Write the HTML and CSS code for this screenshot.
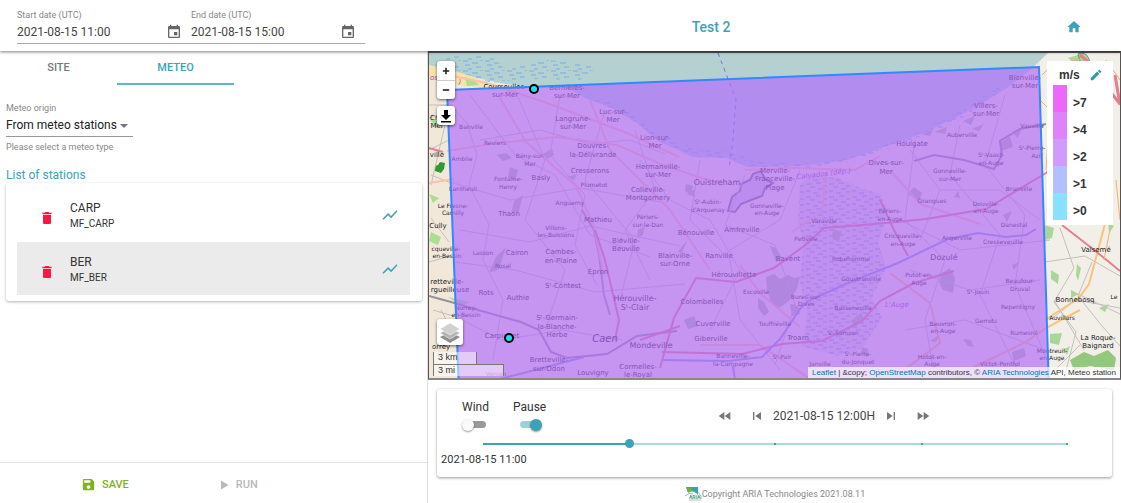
FILE: index.html
```html
<!DOCTYPE html>
<html lang="en">
<head>
    <meta charset="UTF-8">
    <meta name="viewport" content="width=device-width, initial-scale=1.0">
    <title>Test 2</title>
    <link rel="stylesheet" href="styles.css">
</head>
<body>

    <header class="header">
        <div class="dates">
            <div class="date-field">
                <label for="start">Start date (UTC)</label>
                <div class="date-row">
                    <input id="start" type="text" value="2021-08-15 11:00">
                    <button class="icon-button" aria-label="Pick start date">
                        <svg viewBox="0 0 24 24"><path d="M17 12h-5v5h5v-5zM16 1v2H8V1H6v2H5c-1.100 0-2 .9-2 2v14c0 1.100.900 2 2 2h14c1.100 0 2-.9 2-2V5c0-1.100-.9-2-2-2h-1V1h-2zm3 18H5V8h14v11z"/></svg>
                    </button>
                </div>
            </div>
            <div class="date-field">
                <label for="end">End date (UTC)</label>
                <div class="date-row">
                    <input id="end" type="text" value="2021-08-15 15:00">
                    <button class="icon-button" aria-label="Pick end date">
                        <svg viewBox="0 0 24 24"><path d="M17 12h-5v5h5v-5zM16 1v2H8V1H6v2H5c-1.100 0-2 .9-2 2v14c0 1.100.900 2 2 2h14c1.100 0 2-.9 2-2V5c0-1.100-.9-2-2-2h-1V1h-2zm3 18H5V8h14v11z"/></svg>
                    </button>
                </div>
            </div>
        </div>
        <h1>Test 2</h1>
        <a class="home" href="#" aria-label="Home">
            <svg viewBox="0 0 24 24"><path d="M10 20v-6h4v6h5v-8h3L12 3 2 12h3v8z"/></svg>
        </a>
    </header>

    <main class="content">
        <section class="sidebar">
            <nav class="tabs">
                <button class="tab">SITE</button>
                <button class="tab active">METEO</button>
            </nav>

            <div class="panel">
                <div class="origin">
                    <label for="origin">Meteo origin</label>
                    <div class="select-box">
                        <select id="origin">
                            <option>From meteo stations</option>
                        </select>
                    </div>
                    <p class="hint">Please select a meteo type</p>
                </div>

                <h2>List of stations</h2>
                <ul class="stations">
                    <li class="station">
                        <button class="icon-button delete" aria-label="Delete CARP">
                            <svg viewBox="0 0 24 24"><path d="M6 19c0 1.100.9 2 2 2h8c1.100 0 2-.9 2-2V7H6v12zM19 4h-3.500l-1-1h-5l-1 1H5v2h14V4z"/></svg>
                        </button>
                        <div class="station-name">
                            <span>CARP</span>
                            <small>MF_CARP</small>
                        </div>
                        <button class="icon-button chart" aria-label="Show chart of CARP">
                            <svg viewBox="0 0 24 24"><path d="M3.500 18.490l6-6.010 4 4L22 6.920l-1.410-1.410-7.090 7.970-4-4L2 16.990z"/></svg>
                        </button>
                    </li>
                    <li class="station selected">
                        <button class="icon-button delete" aria-label="Delete BER">
                            <svg viewBox="0 0 24 24"><path d="M6 19c0 1.100.9 2 2 2h8c1.100 0 2-.9 2-2V7H6v12zM19 4h-3.500l-1-1h-5l-1 1H5v2h14V4z"/></svg>
                        </button>
                        <div class="station-name">
                            <span>BER</span>
                            <small>MF_BER</small>
                        </div>
                        <button class="icon-button chart" aria-label="Show chart of BER">
                            <svg viewBox="0 0 24 24"><path d="M3.500 18.490l6-6.010 4 4L22 6.920l-1.410-1.410-7.090 7.970-4-4L2 16.990z"/></svg>
                        </button>
                    </li>
                </ul>
            </div>

            <div class="actions">
                <button class="action save">
                    <svg viewBox="0 0 24 24"><path d="M17 3H5c-1.110 0-2 .9-2 2v14c0 1.100.890 2 2 2h14c1.100 0 2-.9 2-2V7l-4-4zm-5 16c-1.660 0-3-1.340-3-3s1.340-3 3-3 3 1.340 3 3-1.340 3-3 3zm3-10H5V5h10v4z"/></svg>
                    SAVE
                </button>
                <button class="action run" disabled>
                    <svg viewBox="0 0 24 24"><path d="M6 3v18l15-9z"/></svg>
                    RUN
                </button>
            </div>
        </section>

        <section class="viewer">
            <div class="map">
                <svg class="map-canvas" viewBox="429 53 691 326" preserveAspectRatio="xMinYMin slice">
                    <defs>
                        <pattern id="waves" width="22" height="10" patternUnits="userSpaceOnUse">
                            <path d="M1 1h5M10 3h6M18 0h3M3 5h5M14 7h5M6 9h4" stroke="#6fb0e4" fill="none"/>
                        </pattern>
                        <pattern id="marsh" width="23" height="13" patternUnits="userSpaceOnUse">
                            <path d="M1 2h5M11 1h5M18 4h4M5 5h5M13 7h5M1 9h4M8 11h5M18 10h4" stroke="#7f9fe0" stroke-width="1" fill="none"/>
                        </pattern>
                    </defs>

                    <rect x="429" y="53" width="691" height="326" fill="#f2e8da"/>
                    <path d="M1040 53h80v326h-75z" fill="#f2efe9"/>

                    <!-- sea -->
                    <path d="M429 53H1048L1030 70 1007 88 987 100 957 117 923 133 890 145 847 160 803 166 747 167 727 158 693 157 658 141 638 124 612 108 585 98 568 88 538 87 505 84 482 79 455 73 429 67z" fill="#b4d0d1"/>
                    <path d="M446 56h46l14 14 38-11 56 8-20 13-60-1-28 4-24-7-20-2zM585 96l30 6 45 35 40 12 28 2 25 10 50 3 47-7 40-14 34-13 45-24 30-20 5 3-48 33-50 20-60 21-40 5-56-1-20-9-32-1-38-16-25-20-25-13z" fill="url(#waves)"/>
                    <path d="M429 65q30 6 52 15t36 6l-4 4-20-2-30-2q-20-6-34-8z" fill="#f6e3ab"/>
                    <path d="M465 77q10 3 14 8l-12 1zM429 118l12 4-4 6zM429 194l10 4-6 5zM431 232l10 5-3 8-9-4zM448 297l22 5-8 4z" fill="#abdd92"/>

                    <!-- marshes -->
                    <path d="M800 184l12-8 26 2 22 10 20 6 8 18-10 30 8 26-14 30 10 20-20 30-24 8-36-10 6-34-8-30 4-40-6-20z" fill="#e0dcd4"/>
                    <path d="M800 184l12-8 26 2 22 10 20 6 8 18-10 30 8 26-14 30 10 20-20 30-24 8-36-10 6-34-8-30 4-40-6-20z" fill="url(#marsh)"/>
                    <path d="M728 211l4-14 8-6 1-7 9-4 3-6 8-3 4 8 8 4-8 5-3 8-11 4-10 4-6 8z" fill="#d3cfd6" stroke="#747a7c" stroke-width="2"/>

                    <!-- woods -->
                    <g fill="#b0be9e">
                        <path d="M766 277l8-3 6 5 8-4 6 3 6-1-3 12-8 12-10 7-8-6-4-12z"/>
                        <path d="M790 304l8 2 2 8-8 2zM833 229l8 3-2 10-7-4zM686 184l7 2-2 8-6-3zM687 194l8-5v8zM942 273l8-5 5 10-2 15-10-3-4-8zM1000 143l10-6 3 10-12 4zM1012 132l10-4-4 10zM908 194l6-7 8 6-3 8zM921 134l12-4-3 6zM934 132l13-5-2 7zM963 121l12-5-4 9zM972 129l12-5-5 7zM497 155l9-2 6 5-9 3zM510 167l8 3-3 11-7-4zM543 154l9-5 2 6-7 4zM567 177l10-3-3 6zM514 201l9-6-4 16-8 3zM496 257l10-10-7 22-10 4zM638 230l6-3-1 8-6 3zM678 252l9-12-5 13zM684 320l10-4 4 10-10 3zM851 321l10-8 3 6-9 8zM862 347l6 2-1 8-6-4zM1003 215l9-4-5 11zM1012 265l7-3-5 8zM930 341l9-6-3 7zM963 339l8 1 3 7-6-1zM1012 352l12-4 2 8-12 5zM954 197l4-6 2 7zM758 298l6 4 5 10-5 4-6-8zM770 246l6 2 6 10-6 4z"/>
                    </g>
                    <g fill="#abd69a">
                        <path d="M1045 225l9 3-2 10-7 2zM1051 270l8 5-1 9-7-5zM1077 264l4 4-3 13-2-6zM1099 308l10-4-4 8zM1071 290l8 4-8 4zM1050 334l12-1-3 12-9-2zM1108 222l6 4-5 7zM1063 350l7-4-3 9zM1068 58l10-3 6 6-8 4z"/>
                        <path d="M1070 360l14-8 10 4 14-6 8 8-2 12-24-4-16 4z" fill="#93c97c"/>
                        <path d="M1078 54q8-3 11 5t-9 2z" stroke="#5c9b68"/>
                    </g>
                    <path d="M435 166l3-1 2-3 5 1-1 6-3 4-6-2z" fill="#2f9b2f"/>

                    <!-- minor roads -->
                    <g fill="none" stroke="#c6bebc" stroke-width="1">
                        <path d="M447 101l20 22 10 32-8 30 20 40-6 35 20 40-10 60M470 95l45 60 40 20 35 60 60 22M515 90l30 70-20 60 40 50-20 60M560 95l-10 60 35 40-10 50 22 40M605 110l-20 70 50 60-15 60M635 130l20 60-30 40 25 50M480 140l60-10 50 14 40-4 35 14M450 182l60 18 70-12 80 14M460 230l70 12 60-16 90 20M455 262l60 8 80 22 90-8M462 320l40 20 60-10 60 10M640 160l30 40 40 20 30 50-30 60M700 160l-10 60 40 40 10 60 40 50M745 175l-20 50 50 20 20 60-20 60M800 170l-20 50-50 30M910 150l30 40 60 0 40 30M915 140l-10 80 40 40-20 60 10 60M960 125l-10 50 50 60-20 60 40 80M1005 95l-20 70 40 50-10 70 30 70M900 220l60 30 90-10M910 270l60 20 70-10M905 330l60-10 80 30M940 190l-20 50"/>
                        <path d="M429 105l18 0M429 118l20-6M429 150l20-10M431 175l20 8M445 125l-14 60M431 218l18 24M429 262l22-6M433 310l20 6M441 310l16 30M1060 228l14 40-20 34 22 30-12 46M1045 262l40-6 35 20M1078 294l42 20M1050 320l26-20 44 8M1080 345l-30 30M1092 262l-14 34 24 30 18 20M1054 300l30 50"/>
                    </g>
                    <path d="M429 296l22 6 20 6 50 14 18 8 12 22 16 6 40-4 30-18 40-5M914 161l20-6 30 5 30 9 8-14-2-14 20-12 26-5" fill="none" stroke="#999097" stroke-width="2"/>
                    <path d="M582 210l12 20 5 25 5 40 6 20" fill="none" stroke="#a0a4a8" stroke-width="2"/>

                    <!-- main roads -->
                    <g fill="none" stroke="#f9c2a8" stroke-width="2">
                        <path d="M447 151l50-8 60-6 60 8 46 20 60 20M500 98l26 44 50 44 18 40 10 50M590 100l20 50 60 60 40 60M429 183l25-4M447 75l40 8 60 20 80 30 52 24M745 170l50-2 60 2 25-14M826 172l-4 40-30 20M700 345l60 0 50 34M740 265l20 28 40 34M890 170l30 34 60 20"/>
                        <path d="M1080 310l-34 18-20 14-50 24-20 13M900 373l40-30-10-40-40-30M1105 224l-16 60-10 14-34 22" stroke="#fbc27c"/>
                    </g>
                    <g fill="none" stroke="#e28090" stroke-width="2">
                        <path d="M660 368l14-50 22-40 40 4 38-14 30-22 20-18 62-5 40-4 60-10 60-36 13-12M662 352l80 2 40-10 40-3 40-20 18-20 34-18 40-12M595 230l10 30 14 60-4 20M640 340l40-14M880 200l14 30 14 26M1062 225l36 28 22 18M429 148l14 4"/>
                        <path d="M1115 75l5 30M1080 55l12 10M1098 76l22 28" stroke-width="3"/>
                    </g>
                    <g fill="none" stroke="#8e9ad4" stroke-width="2">
                        <path d="M500 379l50-13 34-9M662 360l66 1 34-4 18-18 20-30 8-8 40-18 50-20 50-24 30-6 28 4 20-2 10-6"/>
                        <path d="M733 366l2 14"/>
                    </g>
                    <path d="M718 53l10 26 8 20-3 40-4 30" fill="none" stroke="#6a78e8" stroke-dasharray="4 4"/>
                    <path d="M1040 100l10 10-4 60M1110 230l-6 30M1116 180l4 40M1106 60l14 20M1042 75l10-10 30-6" fill="none" stroke="#f0b070"/>

                    <!-- place names -->
                    <g class="place small">
                        <text x="471" y="129">Banville</text><text x="495" y="145">Reviers</text><text x="530" y="158">Bény-sur-</text><text x="530" y="166">Mer</text>
                        <text x="462" y="161">Amblie</text><text x="594" y="187">Plumetot</text><text x="508" y="181">Fontaine-</text><text x="508" y="189">Henry</text>
                        <text x="463" y="191">Lantheuil</text><text x="570" y="205">Anguerny</text><text x="453" y="208">Le Fresne-</text><text x="453" y="215">Camilly</text>
                        <text x="648" y="219">Périers-</text><text x="648" y="227">sur-le-Dan</text><text x="556" y="230">Villons-</text><text x="556" y="237">les-Buissons</text>
                        <text x="446" y="251">cqueville-</text><text x="447" y="258">en-Bessin</text><text x="483" y="255">Lasson</text><text x="503" y="268">Rosel</text>
                        <text x="466" y="310">Norrey-</text><text x="466" y="317">en-Bessin</text><text x="708" y="204">Sᵗ-Aubin-</text><text x="708" y="212">d'Arquenay</text>
                        <text x="767" y="208">Gonneville-</text><text x="767" y="215">en-Auge</text><text x="824" y="223">Varaville</text><text x="890" y="213">Périers-</text><text x="890" y="221">en-Auge</text>
                        <text x="806" y="241">Petiville</text><text x="903" y="238">Cricqueville-</text><text x="903" y="246">en-Auge</text><text x="851" y="261">Robehomme</text>
                        <text x="861" y="281">Goustranville</text><text x="756" y="294">Escoville</text><text x="806" y="299">Bures-sur-</text><text x="806" y="306">Dives</text>
                        <text x="853" y="310">Basseneville</text><text x="775" y="326">Touffréville</text><text x="843" y="335">Sᵗ-Samson</text><text x="733" y="358">Banneville-</text><text x="733" y="366">la-Campagne</text>
                        <text x="782" y="359">Sᵗ-Pair</text><text x="858" y="356">Sᵗ-Pierre-</text><text x="858" y="364">du-Jonquet</text><text x="820" y="366">Janville</text>
                        <text x="962" y="137">Auberville</text><text x="991" y="157">Sᵗ-Vaast-</text><text x="991" y="165">en-Auge</text><text x="1032" y="150">Sᵗ-Pierre-</text><text x="1037" y="158">Azif</text>
                        <text x="1032" y="128">Vauville</text><text x="950" y="173">Gonneville-</text><text x="950" y="181">sur-Mer</text><text x="1019" y="191">Branville</text><text x="932" y="203">Grangues</text>
                        <text x="986" y="206">Douville-</text><text x="986" y="213">en-Auge</text><text x="1014" y="227">Danestal</text><text x="957" y="240">Angerville</text><text x="1003" y="244">Cresseveuille</text>
                        <text x="919" y="277">Putot-en-</text><text x="919" y="285">Auge</text><text x="1020" y="283">Beaufour-</text><text x="1020" y="291">Druval</text><text x="978" y="294">Sᵗ-Jouin</text>
                        <text x="1018" y="309">Repentigny</text><text x="986" y="323">Gerrots</text><text x="943" y="326">Beuvron-</text><text x="943" y="333">en-Auge</text><text x="1024" y="335">Rumesnil</text>
                        <text x="1052" y="353">Montreuil-</text><text x="1052" y="360">en-Auge</text><text x="932" y="359">Hotot-en-</text><text x="932" y="366">Auge</text><text x="1000" y="366">Victot-Pontfol</text>
                        <text x="1062" y="320">Auvillars</text><text x="1114" y="299">Le</text><text x="496" y="376">Verson</text>
                    </g>
                    <g class="place">
                        <text x="505" y="89">Courseulles-</text><text x="505" y="97">sur-Mer</text><text x="567" y="90">Bernières-</text><text x="567" y="98">sur-Mer</text>
                        <text x="573" y="121">Langrune-</text><text x="573" y="129">sur-Mer</text><text x="613" y="114">Luc-sur-</text><text x="613" y="122">Mer</text>
                        <text x="593" y="148">Douvres-</text><text x="593" y="157">la-Délivrande</text><text x="590" y="173">Cresserons</text><text x="541" y="180">Basly</text><text x="509" y="216">Thaon</text>
                        <text x="655" y="140">Lion-sur-</text><text x="655" y="148">Mer</text><text x="658" y="169">Hermanville-</text><text x="658" y="177">sur-Mer</text>
                        <text x="648" y="192">Colleville-</text><text x="648" y="200">Montgomery</text><text x="437" y="157">ville</text><text x="437" y="128">Mer</text><text x="436" y="120">Cro</text>
                        <text x="438" y="228">Cully</text><text x="598" y="222">Mathieu</text><text x="626" y="243">Biéville-</text><text x="626" y="251">Beuville</text><text x="517" y="255">Cairon</text>
                        <text x="561" y="254">Cambes-</text><text x="561" y="263">en-Plaine</text><text x="598" y="274">Épron</text><text x="675" y="258">Blainville-</text><text x="675" y="266">sur-Orne</text>
                        <text x="563" y="288">Sᵗ-Contest</text><text x="447" y="284">retteville-</text><text x="450" y="292">rgueilleuse</text><text x="486" y="295">Rots</text><text x="518" y="300">Authie</text>
                        <text x="557" y="320">Sᵗ-Germain-</text><text x="557" y="329">la-Blanche-</text><text x="557" y="337">Herbe</text><text x="502" y="338">Carpiquet</text>
                        <text x="549" y="362">Bretteville-</text><text x="549" y="371">sur-Odon</text><text x="593" y="375">Louvigny</text><text x="638" y="369">Cormelles-</text><text x="638" y="377">le-Royal</text>
                        <text x="775" y="173">Merville-</text><text x="775" y="181">Franceville-</text><text x="775" y="190">Plage</text><text x="886" y="165">Dives-sur-</text><text x="886" y="174">Mer</text>
                        <text x="912" y="146">Houlgate</text><text x="696" y="235">Bénouville</text><text x="742" y="232">Amfreville</text><text x="719" y="258">Ranville</text><text x="788" y="261">Bavent</text>
                        <text x="734" y="277">Hérouvillette</text><text x="702" y="304">Colombelles</text><text x="713" y="326">Cuverville</text><text x="711" y="341">Giberville</text><text x="798" y="340">Troarn</text>
                        <text x="1025" y="80">Blonville-</text><text x="1025" y="88">sur-Mer</text><text x="986" y="108">Villers-</text><text x="986" y="116">sur-Mer</text>
                        <text x="1096" y="252">Valsemé</text><text x="1075" y="302">Bonnebosq</text><text x="1098" y="340">La Roque-</text><text x="1098" y="348">Baignard</text><text x="441" y="349">orrey</text>
                    </g>
                    <g class="place large">
                        <text x="717" y="185">Ouistreham</text><text x="635" y="301">Hérouville-</text><text x="635" y="310">Sᵗ-Clair</text><text x="651" y="348">Mondeville</text><text x="944" y="260">Dozulé</text>
                    </g>
                    <text class="place city" x="605" y="342">Caen</text>
                    <g class="place region">
                        <text x="824" y="176" transform="rotate(-7 824 176)">Calvados (dép.)</text>
                        <text x="897" y="307">L'Auge</text>
                        <text x="434" y="80">os</text>
                        <text x="460" y="84">)</text>
                    </g>

                    <!-- computed wind area and stations -->
                    <path d="M447 90L1039 67L1049 390H459z" fill="#b16bfc" fill-opacity=".68" stroke="#3388ff" stroke-width="2"/>
                    <g fill="#19e3ee" stroke="#000" stroke-width="2">
                        <circle cx="534" cy="89" r="4"/>
                        <circle cx="509" cy="338" r="4"/>
                    </g>
                </svg>

                <div class="map-left">
                    <div class="map-bar">
                        <button aria-label="Zoom in"><svg viewBox="0 0 10 10"><path d="M5 1v8M1 5h8"/></svg></button>
                        <button aria-label="Zoom out"><svg viewBox="0 0 10 10"><path d="M1 5h8"/></svg></button>
                    </div>
                    <div class="map-bar">
                        <button aria-label="Download"><svg class="icon-download" viewBox="0 0 12 14"><path d="M4 1h4v5h3L6 11 1 6h3zM1 12h10v1.500H1z"/></svg></button>
                    </div>
                </div>

                <div class="map-corner">
                    <button class="layers" aria-label="Layers">
                        <svg viewBox="0 0 26 26">
                            <path d="M13 13l10 5-10 6-10-6z" fill="#8f8f8f"/>
                            <path d="M13 9l10 5-10 6-10-6z" fill="#b4b4b4" stroke="#fff" stroke-width=".5"/>
                            <path d="M13 4l10 6-10 6-10-6z" fill="#d0d0d0" stroke="#fff" stroke-width=".5"/>
                        </svg>
                    </button>
                    <div class="scale">
                        <div class="scale-km">3 km</div>
                        <div class="scale-mi">3 mi</div>
                    </div>
                </div>

                <div class="legend">
                    <div class="legend-head">
                        <span>m/s</span>
                        <button class="icon-button" aria-label="Edit scale">
                            <svg viewBox="0 0 24 24"><path d="M3 17.250V21h3.750L17.810 9.940l-3.750-3.750L3 17.250zM20.710 7.040c.390-.390.390-1.020 0-1.410l-2.340-2.340c-.390-.390-1.020-.390-1.410 0l-1.830 1.830 3.750 3.750 1.830-1.830z"/></svg>
                        </button>
                    </div>
                    <ul>
                        <li class="level-7">&gt;7</li>
                        <li class="level-4">&gt;4</li>
                        <li class="level-2">&gt;2</li>
                        <li class="level-1">&gt;1</li>
                        <li class="level-0">&gt;0</li>
                    </ul>
                </div>

                <div class="attribution"><a href="#">Leaflet</a> | &amp;copy; <a href="#">OpenStreetMap</a> contributors, © <a href="#">ARIA Technologies</a> API, Meteo station</div>
            </div>

            <div class="player">
                <div class="player-top">
                    <div class="switches">
                        <label class="switch">Wind <input type="checkbox"></label>
                        <label class="switch">Pause <input type="checkbox" checked></label>
                    </div>
                    <div class="playback">
                        <div class="playback-group">
                            <button class="icon-button" aria-label="First"><svg viewBox="0 0 24 24"><path d="M11 18V6l-8.500 6 8.500 6zm.5-6l8.500 6V6l-8.500 6z"/></svg></button>
                            <button class="icon-button" aria-label="Previous"><svg viewBox="0 0 24 24"><path d="M6 6h2v12H6zm3.500 6l8.500 6V6z"/></svg></button>
                        </div>
                        <span>2021-08-15 12:00H</span>
                        <div class="playback-group">
                            <button class="icon-button" aria-label="Next"><svg viewBox="0 0 24 24"><path d="M6 18l8.500-6L6 6v12zM16 6v12h2V6h-2z"/></svg></button>
                            <button class="icon-button" aria-label="Last"><svg viewBox="0 0 24 24"><path d="M4 18l8.500-6L4 6v12zm9-12v12l8.500-6L13 6z"/></svg></button>
                        </div>
                    </div>
                </div>
                <input class="timeline" type="range" min="0" max="4" value="1" aria-label="Time">
                <span class="timeline-start">2021-08-15 11:00</span>
            </div>

            <footer class="footer">
                <svg viewBox="0 0 18 15">
                    <path d="M2 1h12v9H5z" fill="#3aa0b4"/>
                    <path d="M2 1l7 2-3 7z" fill="#6cb33e"/>
                    <path d="M1 9q8-7 13 0l2 4H8z" fill="#fff"/>
                    <path d="M1 10q4-4 8-2M14 6l3 4v3" fill="none" stroke="#a9b4b4"/>
                    <path d="M5 14h12" stroke="#bbb"/>
                    <text x="5" y="13">ARIA</text>
                </svg>
                <span>Copyright ARIA Technologies 2021.08.11</span>
            </footer>
        </section>
    </main>

</body>
</html>
```
FILE: styles.css
```css
* {
    box-sizing: border-box;
}
body {
    margin: 0;
    height: 100vh;
    display: flex;
    flex-direction: column;
    overflow: hidden;
    font-family: Roboto, sans-serif;
    font-size: 12px;
    line-height: 16px;
    color: #333;
    background-color: #fff;
}
button,
input,
select {
    font: inherit;
    color: inherit;
    border: none;
    background: none;
    padding: 0;
    margin: 0;
}
button {
    cursor: pointer;
}
svg {
    display: block;
    fill: currentColor;
}
h1, h2, p, ul {
    margin: 0;
    padding: 0;
    list-style: none;
}
.icon-button {
    display: flex;
    align-items: center;
    justify-content: center;
}
.icon-button svg {
    width: 16px;
    height: 16px;
}

/* header */
.header {
    display: flex;
    align-items: center;
    height: 51px;
    padding: 0 30px 0 17px;
    position: relative;
    z-index: 1;
    background-color: #fff;
    box-shadow: 0 1px 3px rgba(0, 0, 0, 0.5);
}
.dates {
    display: flex;
    margin-top: 2px;
}
.date-field {
    width: 174px;
    border-bottom: 1px solid #aaa;
}
.date-field label,
.origin label,
.hint {
    display: block;
    font-size: 9px;
    line-height: 12px;
    color: #888;
}
.date-row {
    display: flex;
    align-items: center;
    height: 22px;
    padding-right: 9px;
    color: #444;
}
.date-row input {
    flex: 1;
    min-width: 0;
}
.date-row svg {
    fill: #666;
}
.header h1 {
    flex: 1;
    margin-top: 3px;
    text-align: center;
    font-size: 14px;
    font-weight: 500;
    color: #3ba3b5;
}
.home {
    width: 34px;
    margin-top: 3px;
    color: #3ba3b5;
}
.home svg {
    width: 16px;
    height: 16px;
    margin: 0 auto;
}

.content {
    flex: 1;
    min-height: 0;
    display: grid;
    grid-template-columns: 21fr 34fr;
}

/* left side */
.sidebar {
    display: flex;
    flex-direction: column;
    min-width: 0;
    border-right: 1px solid #ddd;
}
.tabs {
    display: flex;
}
.tab {
    width: 117px;
    height: 34px;
    padding-top: 2px;
    font-size: 11px;
    font-weight: 500;
    color: #777;
    border-bottom: 2px solid transparent;
}
.tab.active {
    color: #3ba3b5;
    border-bottom-color: #5bb8c8;
}
.panel {
    flex: 1;
    padding: 17px 5px 0 6px;
}
.select-box {
    position: relative;
    width: 127px;
    height: 23px;
    border-bottom: 1px solid #999;
}
.select-box::after {
    content: "";
    position: absolute;
    right: 5px;
    top: 10px;
    border: 4px solid transparent;
    border-top-color: #777;
    pointer-events: none;
}
.select-box select {
    width: 100%;
    height: 22px;
    appearance: none;
    color: #222;
}
.hint {
    margin-top: 4px;
}
.panel h2 {
    margin: 14px 0 0;
    font-size: 12px;
    font-weight: 400;
    color: #3ba3b5;
}
.stations {
    padding: 5px 12px 6px 11px;
    border-radius: 3px;
    box-shadow: 0 1px 3px rgba(0, 0, 0, 0.3);
}
.station {
    display: flex;
    align-items: center;
    height: 53px;
    padding-right: 11px;
}
.station + .station {
    margin-top: 1px;
}
.station.selected {
    background-color: #ebebeb;
}
.station .delete {
    width: 59px;
    margin-right: -6px;
    padding-top: 6px;
    color: #ff1744;
}
.station-name {
    flex: 1;
    padding-top: 3px;
}
.station-name span,
.station-name small {
    display: block;
    font-size: 12px;
}
.station-name small {
    font-size: 10px;
}
.station .chart svg {
    width: 18px;
    height: 18px;
    fill: #3ba3b5;
}
.actions {
    display: flex;
    gap: 89px;
    height: 41px;
    padding: 3px 0 0 81px;
    border-top: 1px solid #e4e4e4;
}
.action {
    display: flex;
    align-items: center;
    gap: 6px;
    font-size: 11px;
    font-weight: 500;
}
.action svg {
    width: 15px;
    height: 15px;
}
.save {
    color: #7cb518;
}
.run {
    color: #b8b8b8;
    cursor: default;
}
.run svg {
    width: 12px;
    height: 12px;
}

/* right side */
.viewer {
    display: flex;
    flex-direction: column;
    min-width: 0;
    min-height: 0;
}
.map {
    flex: 1;
    min-height: 0;
    position: relative;
    overflow: hidden;
    border: 1px solid #555;
    border-top-width: 2px;
    border-bottom: 2px solid #888;
}
.map-canvas {
    width: 100%;
    height: 100%;
}
.place {
    font-family: "DejaVu Sans", sans-serif;
    font-size: 7px;
    text-anchor: middle;
    fill: #222;
}
.place.small {
    font-size: 6px;
}
.place.large {
    font-size: 8px;
}
.place.city {
    font-size: 10px;
    font-style: italic;
}
.place.region {
    font-style: italic;
    fill: #9a50b8;
}
.map-left {
    position: absolute;
    left: 8px;
    top: 8px;
    display: flex;
    flex-direction: column;
    gap: 7px;
}
.map-bar,
.layers {
    border-radius: 3px;
    background-color: #fff;
    box-shadow: 0 1px 3px rgba(0, 0, 0, 0.6);
}
.map-bar button {
    display: flex;
    align-items: center;
    justify-content: center;
    width: 18px;
    height: 19px;
}
.map-bar button + button {
    border-top: 1px solid #ccc;
}
.map-bar svg {
    width: 8px;
    height: 8px;
    stroke: #222;
    stroke-width: 2;
}
.map-bar .icon-download {
    width: 12px;
    height: 14px;
    fill: #000;
    stroke: none;
}
.map-corner {
    position: absolute;
    left: 4px;
    bottom: 2px;
}
.layers {
    display: block;
    width: 26px;
    height: 26px;
    margin: 0 0 7px 4px;
}
.scale {
    font-family: "Liberation Sans", sans-serif;
    font-size: 9px;
    line-height: 11px;
}
.scale div {
    height: 12px;
    padding-left: 4px;
    border: 1px solid #777;
    border-top: none;
    background-color: rgba(255, 255, 255, 0.5);
}
.scale .scale-km {
    width: 44px;
    border-bottom: none;
}
.scale .scale-mi {
    width: 71px;
    border-top: 1px solid #777;
    border-bottom: none;
}
.legend {
    position: absolute;
    right: 7px;
    top: 8px;
    width: 66px;
    padding: 4px 6px 5px;
    background-color: #fff;
    font-family: "Liberation Sans", sans-serif;
    font-weight: bold;
}
.legend-head {
    display: flex;
    align-items: center;
    justify-content: space-between;
    height: 20px;
    padding: 0 4px 0 6px;
}
.legend-head svg {
    width: 14px;
    height: 14px;
    fill: #2f9bb0;
}
.legend li {
    height: 27px;
    padding: 10px 0 0 6px;
    border-left: 14px solid #fff;
}
.legend .level-7 {
    border-color: #ec68ff;
}
.legend .level-4 {
    border-color: #de82ff;
}
.legend .level-2 {
    border-color: #cf9bff;
}
.legend .level-1 {
    border-color: #b3bfff;
}
.legend .level-0 {
    border-color: #88e1ff;
}
.attribution {
    position: absolute;
    right: 0;
    bottom: 0;
    padding: 0 4px;
    background-color: rgba(255, 255, 255, 0.7);
    font-family: "Liberation Sans", sans-serif;
    font-size: 8px;
    line-height: 11px;
    white-space: nowrap;
}
.attribution a {
    color: #0078a8;
    text-decoration: none;
}

.player {
    margin: 9px 9px 0;
    height: 88px;
    padding: 10px 5px 0 4px;
    border-radius: 3px;
    box-shadow: 0 1px 3px rgba(0, 0, 0, 0.4);
}
.player-top {
    display: flex;
    justify-content: space-between;
    padding-right: 176px;
}
.switches {
    display: flex;
    gap: 24px;
    padding-left: 21px;
}
.switch {
    display: flex;
    flex-direction: column;
    align-items: center;
    gap: 3px;
}
.switch input {
    appearance: none;
    display: flex;
    align-items: center;
    width: 20px;
    height: 7px;
    margin: 3px 0;
    border-radius: 4px;
    background-color: #999;
}
.switch input::before {
    content: "";
    width: 12px;
    height: 12px;
    margin-left: -4px;
    flex-shrink: 0;
    border-radius: 50%;
    background-color: #fafafa;
    box-shadow: 0 1px 2px rgba(0, 0, 0, 0.4);
}
.switch input:checked {
    background-color: #9dd1da;
}
.switch input:checked::before {
    margin-left: 10px;
    background-color: #3ba3b5;
}
.playback {
    display: flex;
    align-items: center;
    gap: 8px;
    padding-top: 2px;
    color: #444;
}
.playback-group {
    display: flex;
    gap: 16px;
}
.playback svg {
    fill: #777;
}
.timeline {
    display: block;
    appearance: none;
    width: calc(100% - 71px);
    height: 9px;
    margin: 8px 0 4px 37px;
}
.timeline::-webkit-slider-runnable-track {
    height: 9px;
    background:
        linear-gradient(90deg, transparent calc(50% - 1px), #3ba3b5 calc(50% - 1px), #3ba3b5 calc(50% + 1px), transparent calc(50% + 1px), transparent calc(75% - 1px), #3ba3b5 calc(75% - 1px), #3ba3b5 calc(75% + 1px), transparent calc(75% + 1px), transparent calc(100% - 2px), #3ba3b5 calc(100% - 2px)) center / calc(100% - 10px) 2px no-repeat,
        linear-gradient(90deg, #3ba3b5 25%, #a9d8df 25%) center / calc(100% - 10px) 2px no-repeat;
}
.timeline::-webkit-slider-thumb {
    appearance: none;
    width: 9px;
    height: 9px;
    border-radius: 50%;
    background-color: #3ba3b5;
}
.timeline-start {
    display: block;
    font-size: 11px;
}
.footer {
    display: flex;
    align-items: center;
    justify-content: center;
    height: 26px;
    padding-top: 7px;
    font-size: 9px;
    color: #888;
}
.footer svg {
    width: 18px;
    height: 15px;
}
.footer text {
    font-size: 5px;
    font-weight: bold;
    fill: #3aa57a;
}
```
